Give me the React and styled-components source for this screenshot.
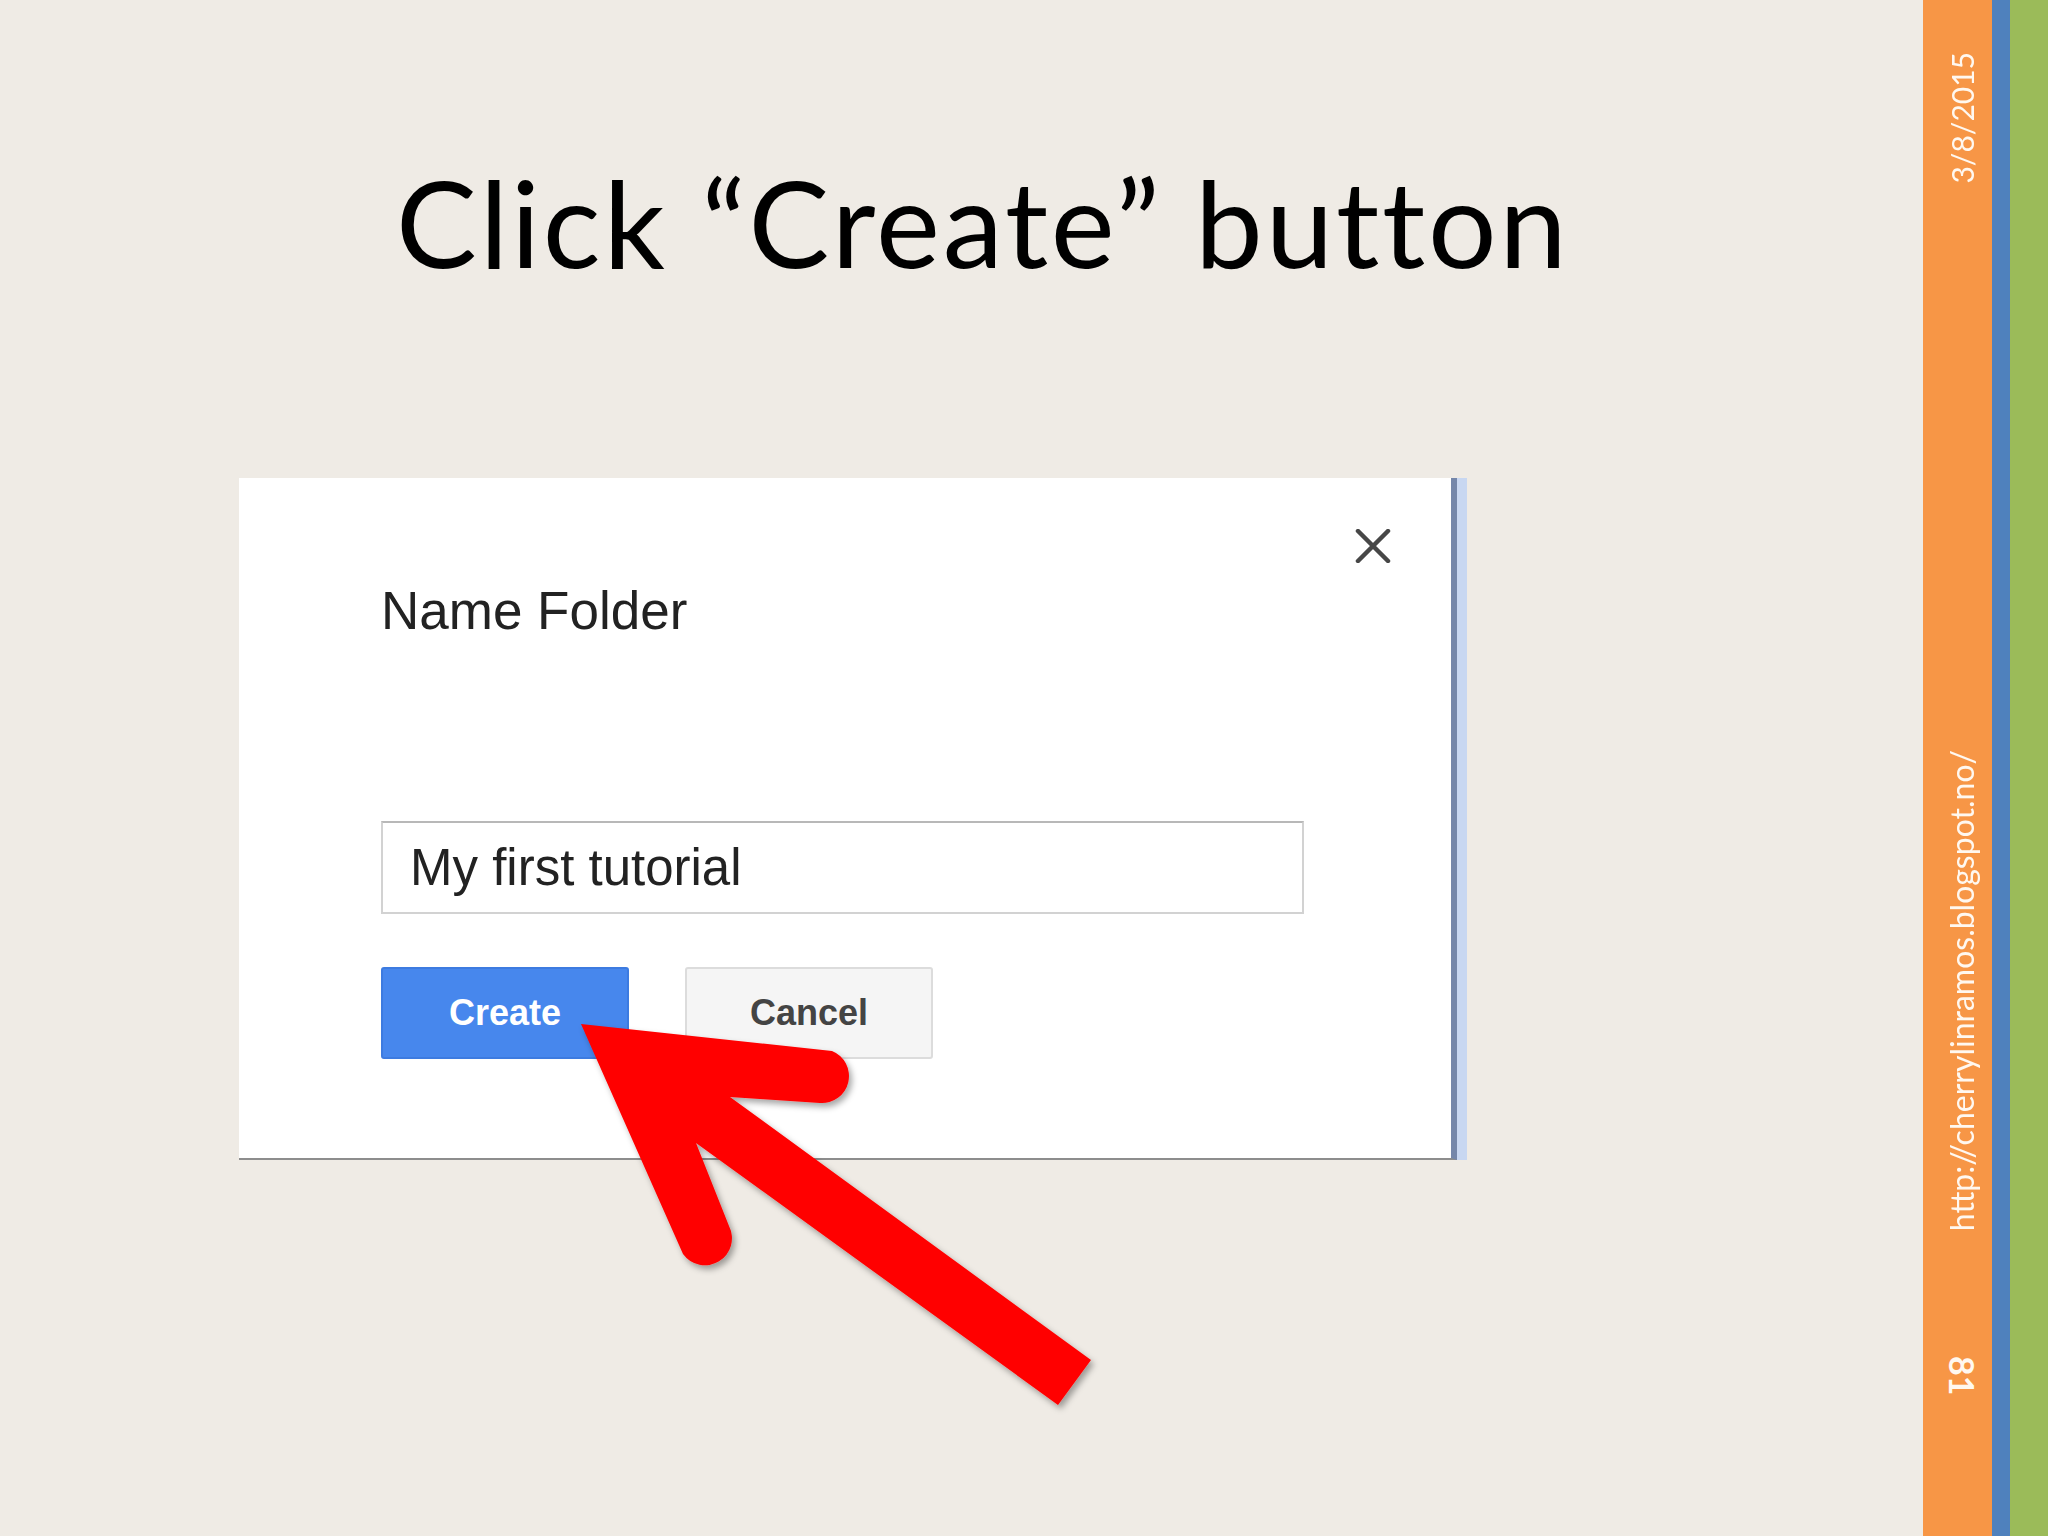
import React from 'react';
import styled, { createGlobalStyle } from 'styled-components';

const GlobalStyle = createGlobalStyle`
  html, body {
    margin: 0;
    padding: 0;
    width: 2048px;
    height: 1536px;
    overflow: hidden;
    background: #efebe5;
  }
`;

const Slide = styled.div`
  position: relative;
  display: flex;
  width: 2048px;
  height: 1536px;
`;

const Main = styled.div`
  flex: 1;
  display: flex;
  flex-direction: column;
  align-items: flex-start;
  background: #efebe5;
`;

const Title = styled.h1`
  margin: 161px 0 0 396px;
  font-family: Lato, 'Open Sans', sans-serif;
  font-weight: 400;
  font-size: 121px;
  line-height: 1;
  letter-spacing: 2.8px;
  font-variant-ligatures: none;
  color: #000;
  white-space: nowrap;
`;

const Dialog = styled.div`
  position: relative;
  margin: 196px 0 0 239px;
  width: 1070px;
  padding: 106px 0 99px 142px;
  background: #fff;
  border-right: 6px solid #7587aa;
  border-bottom: 2px solid #8d8d8d;
  box-shadow: 10px 0 0 #c8d7f1;
`;

const CloseButton = styled.div`
  position: absolute;
  top: 51px;
  right: 60px;
  width: 36px;
  height: 34px;
  display: flex;
  align-items: center;
  justify-content: center;
`;

const DialogTitle = styled.div`
  font-family: 'Liberation Sans', Arial, sans-serif;
  font-size: 53px;
  line-height: 1;
  color: #222;
`;

const NameInput = styled.input`
  display: block;
  box-sizing: border-box;
  margin-top: 184px;
  width: 923px;
  height: 93px;
  padding: 0 0 0 27px;
  border: 2px solid #d2d2d2;
  border-top-color: #b8b8b8;
  background: #fff;
  font-family: 'Liberation Sans', Arial, sans-serif;
  font-size: 51px;
  color: #222;
  outline: none;
`;

const ButtonRow = styled.div`
  display: flex;
  gap: 56px;
  margin-top: 53px;
`;

const Button = styled.button`
  box-sizing: border-box;
  width: 248px;
  height: 92px;
  border-radius: 3px;
  border: 2px solid ${p => (p.$primary ? '#3d7be0' : '#dcdcdc')};
  background: ${p => (p.$primary ? '#4787ed' : '#f5f5f5')};
  color: ${p => (p.$primary ? '#fff' : '#444')};
  font-family: 'Liberation Sans', Arial, sans-serif;
  font-weight: 700;
  font-size: 36px;
  padding: 0;
`;

const SideBar = styled.div`
  width: 69px;
  background: #f79646;
  display: flex;
  flex-direction: column;
  align-items: center;
  padding: 52px 0 141px 8px;
  box-sizing: border-box;
`;

const SideText = styled.div`
  writing-mode: vertical-rl;
  transform: ${p => (p.$down ? 'none' : 'rotate(180deg)')};
  font-family: Lato, 'Open Sans', sans-serif;
  font-size: ${p => p.$size}px;
  font-weight: ${p => (p.$bold ? 700 : 400)};
  line-height: 1;
  color: #fff8f0;
  white-space: nowrap;
`;

const Spacer = styled.div`
  flex: ${p => (p.$size ? `0 0 ${p.$size}px` : 1)};
`;

const Stripe = styled.div`
  width: ${p => p.$width}px;
  background: ${p => p.$color};
`;

const Overlay = styled.svg`
  position: absolute;
  top: 0;
  left: 0;
  pointer-events: none;
`;

const arrowPath = [
  'M 581 1024',
  'L 832 1051',
  'A 27 27 0 0 1 820 1103',
  'L 730 1097',
  'L 1091 1360',
  'L 1058 1405',
  'L 696 1143',
  'L 729 1226',
  'A 27 27 0 0 1 683 1254',
  'Z',
].join(' ');

const App = () => {
  return (
    <Slide>
      <GlobalStyle />
      <Main>
        <Title>Click “Create” button</Title>
        <Dialog>
          <CloseButton>
            <svg width="36" height="34" viewBox="0 0 36 34">
              <path d="M3 2 L33 32 M33 2 L3 32" stroke="#474747" strokeWidth="4.5" strokeLinecap="round" />
            </svg>
          </CloseButton>
          <DialogTitle>Name Folder</DialogTitle>
          <NameInput readOnly defaultValue="My first tutorial" />
          <ButtonRow>
            <Button $primary>Create</Button>
            <Button>Cancel</Button>
          </ButtonRow>
        </Dialog>
      </Main>
      <SideBar>
        <SideText $size={30}>3/8/2015</SideText>
        <Spacer />
        <SideText $size={32}>http://cherrylinramos.blogspot.no/</SideText>
        <Spacer $size={124} />
        <SideText $size={34} $bold $down>81</SideText>
      </SideBar>
      <Stripe $width={18} $color="#4f81bd" />
      <Stripe $width={38} $color="#9bbb59" />
      <Overlay width="2048" height="1536" viewBox="0 0 2048 1536">
        <defs>
          <filter id="arrowShadow" x="-10%" y="-10%" width="130%" height="130%">
            <feDropShadow dx="3" dy="4" stdDeviation="3" floodColor="#000" floodOpacity="0.35" />
          </filter>
        </defs>
        <path d={arrowPath} fill="#ff0000" filter="url(#arrowShadow)" />
      </Overlay>
    </Slide>
  );
};

export default App;
